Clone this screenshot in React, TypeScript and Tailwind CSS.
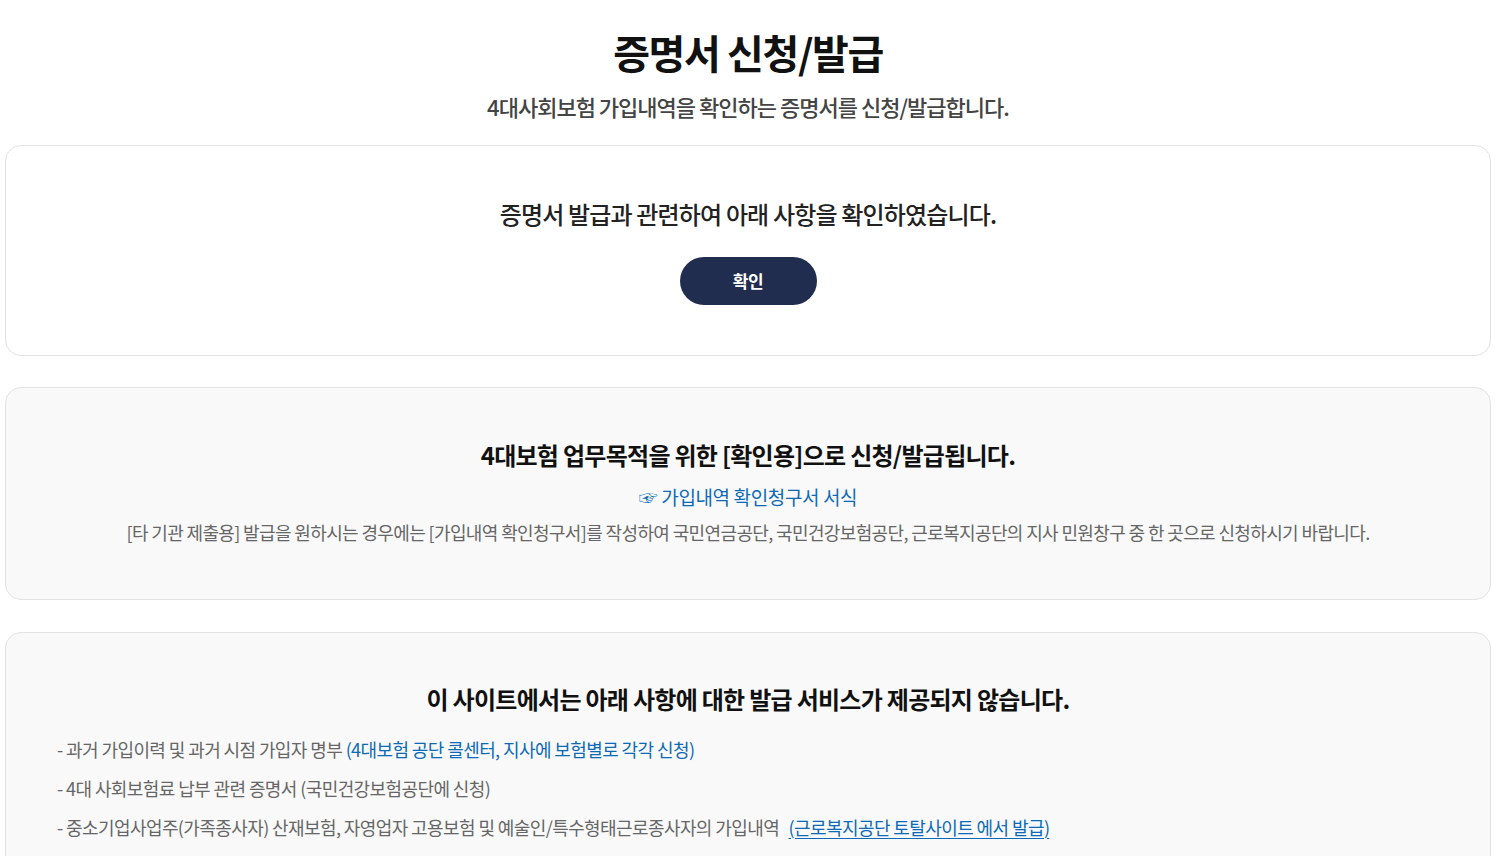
import React from 'react';

const font = { fontFamily: '"Noto Sans CJK KR", "Noto Sans", sans-serif' };

export default function App() {
  return (
    <div className="min-h-screen bg-white pl-[5px] pr-[13px] pt-[24px] pb-10" style={font}>
      <header className="text-center">
        <h1 className="text-[40px] font-bold leading-[56px] tracking-[-0.035em] text-[#111]">증명서 신청/발급</h1>
        <p className="mt-[10px] text-[22px] font-medium leading-[32px] tracking-[-0.045em] text-[#444]">
          4대사회보험 가입내역을 확인하는 증명서를 신청/발급합니다.
        </p>
      </header>

      <section className="mt-[23px] flex flex-col items-center rounded-[16px] border border-[#e3e3e3] bg-white pt-[50px] pb-[50px]">
        <p className="text-[24px] font-medium leading-[36px] tracking-[-0.035em] text-[#222]">증명서 발급과 관련하여 아래 사항을 확인하였습니다.</p>
        <button className="mt-[25px] h-[48px] w-[137px] rounded-full bg-[#212d4f] text-[17px] font-bold tracking-[-0.02em] text-white">
          확인
        </button>
      </section>

      <section className="mt-[31px] flex flex-col items-center rounded-[16px] border border-[#e3e3e3] bg-[#f9f9f9] pt-[49px] pb-[53px]">
        <h2 className="text-[24px] font-bold leading-[36px] tracking-[-0.03em] text-[#111]">
          4대보험 업무목적을 위한 [확인용]으로 신청/발급됩니다.
        </h2>
        <a href="#" className="mt-[10px] text-[19px] leading-[28px] tracking-[-0.02em] text-[#0b6ab8]">
          ☞ 가입내역 확인청구서 서식
        </a>
        <p className="mt-[7px] text-[18px] leading-[28px] tracking-[-0.035em] text-[#666]">
          [타 기관 제출용] 발급을 원하시는 경우에는 [가입내역 확인청구서]를 작성하여 국민연금공단, 국민건강보험공단, 근로복지공단의 지사 민원창구 중 한 곳으로 신청하시기 바랍니다.
        </p>
      </section>

      <section className="mt-[32px] rounded-[16px] border border-[#e3e3e3] bg-[#f9f9f9] px-[51px] pt-[48px] pb-[50px]">
        <h2 className="text-center text-[24px] font-bold leading-[36px] tracking-[-0.03em] text-[#111]">
          이 사이트에서는 아래 사항에 대한 발급 서비스가 제공되지 않습니다.
        </h2>
        <ul className="mt-[18px] flex flex-col gap-[11px] text-[18px] leading-[28px] tracking-[-0.033em] text-[#666]">
          <li>
            - 과거 가입이력 및 과거 시점 가입자 명부 <span className="text-[#0b6ab8]">(4대보험 공단 콜센터, 지사에 보험별로 각각 신청)</span>
          </li>
          <li>- 4대 사회보험료 납부 관련 증명서 (국민건강보험공단에 신청)</li>
          <li>
            - 중소기업사업주(가족종사자) 산재보험, 자영업자 고용보험 및 예술인/특수형태근로종사자의 가입내역{' '}
            <a href="#" className="ml-[6px] text-[#0b6ab8] underline underline-offset-[3px]">(근로복지공단 토탈사이트 에서 발급)</a>
          </li>
        </ul>
      </section>
    </div>
  );
}
